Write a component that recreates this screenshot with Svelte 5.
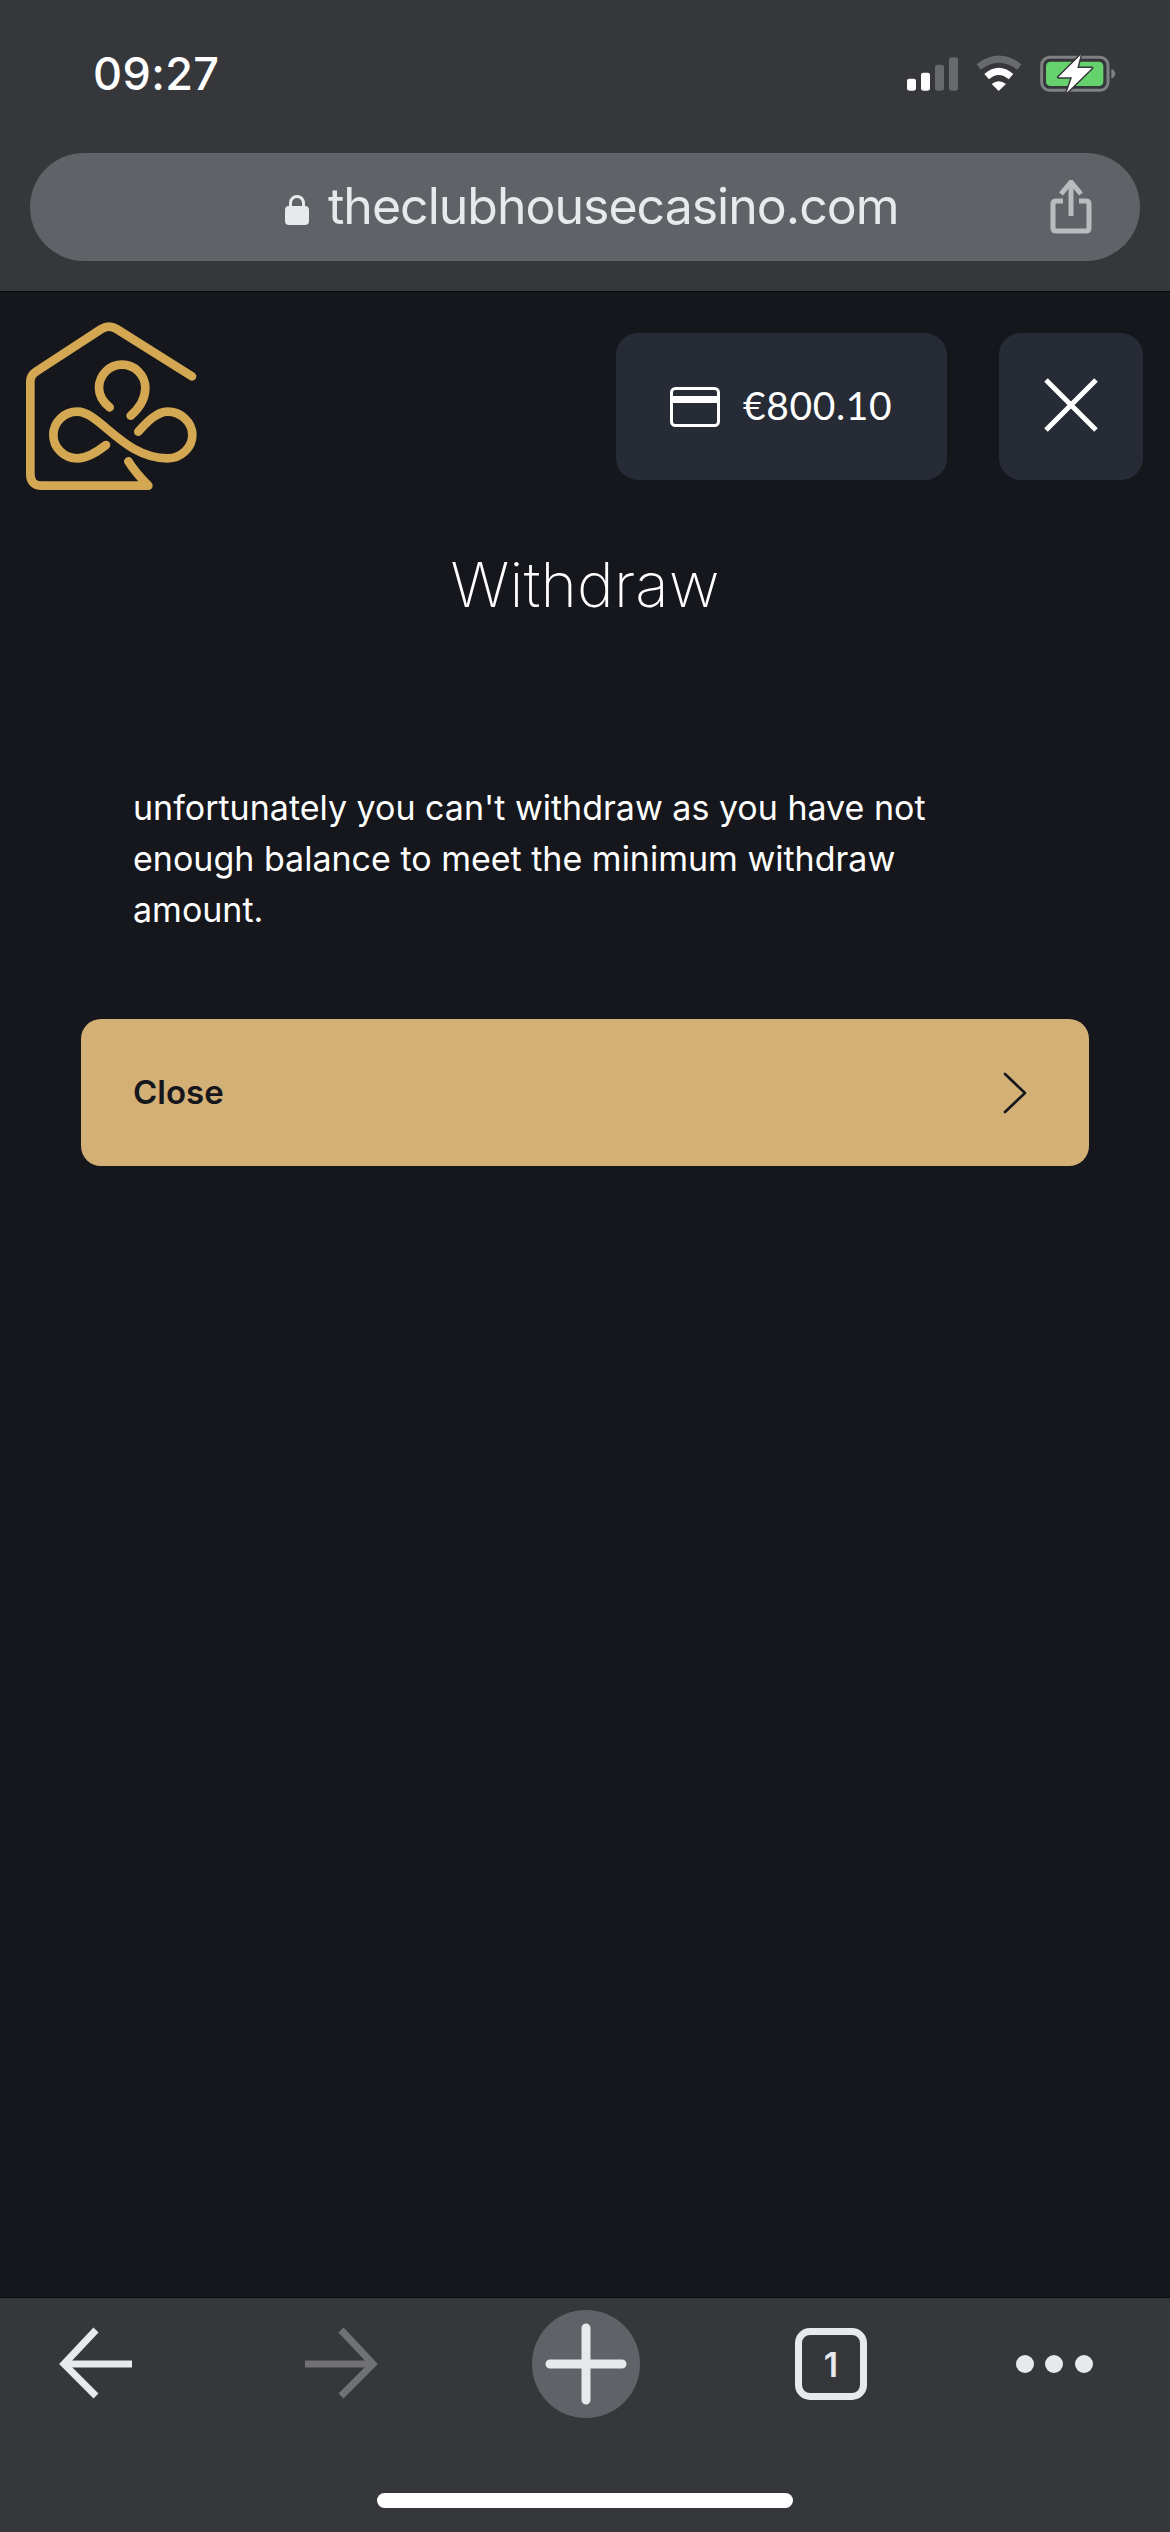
<script lang="ts">
	const message = "unfortunately you can't withdraw as you have not enough balance to meet the minimum withdraw amount.";
	const balance = '€800.10';
</script>

<div class="page">
	<!-- Safari top chrome -->
	<header class="chrome-top">
		<div class="status">
			<span class="time">09:27</span>
			<svg class="status-icons" viewBox="0 0 780 180" aria-hidden="true">
				<rect x="81" y="116" width="27" height="36" rx="7" fill="#fff" />
				<rect x="123" y="98" width="27" height="54" rx="7" fill="#fff" />
				<rect x="165" y="74" width="27" height="78" rx="7" fill="#68696c" />
				<rect x="207" y="52" width="27" height="100" rx="7" fill="#68696c" />
				<path d="M296 81 Q356 34 418 81" fill="none" stroke="#68696c" stroke-width="21" stroke-linecap="butt" />
				<path d="M320 110 Q356 78 393 110" fill="none" stroke="#fff" stroke-width="21" stroke-linecap="butt" />
				<path d="M335 132 Q356 116 378 132 L356 153 Z" fill="#fff" />
				<rect x="485" y="52" width="199" height="99" rx="24" fill="none" stroke="#7f8082" stroke-width="9" />
				<rect x="498" y="65" width="172" height="73" rx="13" fill="#65d26e" />
				<path d="M694 86 Q706 92 706 101 Q706 110 694 116 Z" fill="#7f8082" />
				<path d="M602 45 L535 112 L576 112 L560 158 L636 84 L592 84 Z" fill="#fff" stroke="#36373b" stroke-width="9" paint-order="stroke" stroke-linejoin="round" />
			</svg>
		</div>
		<div class="urlbar">
			<svg class="lock" viewBox="0 0 24 31" aria-hidden="true">
				<path d="M5.5 13 V9 A6.5 6.5 0 0 1 18.5 9 V13" fill="none" stroke="#e8e9ec" stroke-width="3" />
				<rect x="0" y="12" width="24" height="19" rx="4" fill="#e8e9ec" />
			</svg>
			<span class="url">theclubhousecasino.com</span>
			<svg class="share" viewBox="0 0 42 54" aria-hidden="true">
				<path d="M13 21 H6 Q3 21 3 24 V48 Q3 51 6 51 H36 Q39 51 39 48 V24 Q39 21 36 21 H29" fill="none" stroke="#b9bbbf" stroke-width="5" />
				<path d="M21 3 V36" stroke="#b9bbbf" stroke-width="5" />
				<path d="M11 14 L21 2 L31 14" fill="none" stroke="#b9bbbf" stroke-width="5" />
			</svg>
		</div>
	</header>

	<main class="content">
		<div class="site-head">
			<svg class="logo" viewBox="0 0 780 660" aria-label="The Clubhouse Casino">
				<g fill="none" stroke="#d4a853" stroke-width="26" stroke-linecap="round" stroke-linejoin="round">
					<path d="M576 262 L350 120 Q327 106 304 120 L108 248 Q91 259 91 278 L91 555 Q91 590 125 590 L445 590 Q405 550 385 517" />
					<path d="M329 355 C310 340 297 320 297 297 C297 258 328 227 366 227 C404 227 436 258 436 297 C436 330 415 360 392 380" />
					<path d="M318 468 C290 490 262 508 232 508 C192 508 160 476 160 438 C160 400 192 368 232 368 C300 368 370 508 503 508 C543 508 577 476 577 438 C577 400 543 368 503 368 C470 368 440 400 415 428" />
				</g>
			</svg>
			<div class="head-actions">
				<button class="balance">
					<svg class="card" viewBox="0 0 50 40" aria-hidden="true">
						<rect x="1.5" y="1.5" width="47" height="37" rx="4" fill="none" stroke="#fff" stroke-width="3" />
						<rect x="1.5" y="9" width="47" height="7" fill="#fff" />
					</svg>
					<span class="amount">{balance}</span>
				</button>
				<button class="icon-btn" aria-label="Close">
					<svg viewBox="0 0 54 54" aria-hidden="true">
						<path d="M2 2 L52 52 M52 2 L2 52" stroke="#fff" stroke-width="5" />
					</svg>
				</button>
			</div>
		</div>

		<h1 class="title">Withdraw</h1>
		<p class="message">{message}</p>
		<button class="primary">
			<span class="primary-label">Close</span>
			<svg viewBox="0 0 24 42" aria-hidden="true">
				<path d="M2 2 L22 21 L2 40" fill="none" stroke="#15171c" stroke-width="2.6" stroke-linecap="round" stroke-linejoin="round" />
			</svg>
		</button>
	</main>

	<!-- Safari bottom chrome -->
	<footer class="chrome-bottom">
		<nav class="toolbar">
			<svg class="tool" viewBox="0 0 108 108" aria-hidden="true">
				<path d="M90 54 H24" stroke="#e8e9ec" stroke-width="7" />
				<path d="M54 20 L22 54 L54 86" fill="none" stroke="#e8e9ec" stroke-width="7" />
			</svg>
			<svg class="tool" viewBox="0 0 108 108" aria-hidden="true">
				<path d="M18 54 H84" stroke="#707174" stroke-width="7" />
				<path d="M54 20 L86 54 L54 86" fill="none" stroke="#707174" stroke-width="7" />
			</svg>
			<svg class="tool" viewBox="0 0 108 108" aria-hidden="true">
				<circle cx="54" cy="54" r="54" fill="#5f6266" />
				<path d="M54 18 V90 M18 54 H90" stroke="#e8e9ec" stroke-width="9" stroke-linecap="round" />
			</svg>
			<div class="tabs">1</div>
			<svg class="tool dots" viewBox="0 0 108 108" aria-hidden="true">
				<circle cx="25" cy="54" r="9" fill="#e8e9ec" />
				<circle cx="54" cy="54" r="9" fill="#e8e9ec" />
				<circle cx="84" cy="54" r="9" fill="#e8e9ec" />
			</svg>
		</nav>
		<div class="home-indicator"></div>
	</footer>
</div>

<style>
	:global(body) {
		margin: 0;
		background: #15171c;
	}

	.page {
		width: 1170px;
		height: 2532px;
		display: flex;
		flex-direction: column;
		font-family: Inter, 'Noto Sans', sans-serif;
		color: #fff;
	}

	button {
		font: inherit;
		color: inherit;
		border: none;
		cursor: pointer;
	}

	.chrome-top {
		height: 291px;
		background: #36373b;
		border-bottom: 1px solid #0b0c0e;
	}

	.status {
		height: 113px;
		padding: 40px 30px 0 93px;
		display: flex;
		justify-content: space-between;
		align-items: flex-start;
	}

	.time {
		margin-top: 10px;
		font-size: 45px;
		line-height: 48px;
		font-weight: 550;
		letter-spacing: 0.4px;
	}

	.status-icons {
		width: 260px;
		height: 60px;
	}

	.urlbar {
		height: 108px;
		margin: 0 30px;
		padding: 0 48px 0 255px;
		background: #5f6266;
		border-radius: 54px;
		display: flex;
		align-items: center;
		gap: 19px;
	}

	.lock {
		width: 24px;
		height: 31px;
		margin-top: 4px;
	}

	.url {
		font-size: 50px;
		line-height: 60px;
		color: #e8e9ec;
		letter-spacing: -1px;
		margin-top: -2px;
	}

	.share {
		width: 42px;
		height: 54px;
		margin-left: auto;
	}

	.content {
		flex: 1;
		background: #15171c;
		display: flex;
		flex-direction: column;
	}

	.site-head {
		height: 220px;
		display: flex;
		justify-content: space-between;
		align-items: flex-start;
		padding-right: 27px;
	}

	.logo {
		width: 260px;
		height: 220px;
		margin-top: -3px;
	}

	.head-actions {
		display: flex;
		gap: 52px;
		margin-top: 41px;
	}

	.balance {
		width: 331px;
		height: 147px;
		background: #272b35;
		border-radius: 22px;
		display: flex;
		align-items: center;
		gap: 23px;
		padding: 0 0 0 54px;
		font-family: Lato, sans-serif;
		font-size: 39px;
		font-weight: 400;
		letter-spacing: 0.6px;
		color: #fff;
	}

	.amount {
		margin-top: -3px;
	}

	.card {
		width: 50px;
		height: 40px;
	}

	.icon-btn {
		width: 144px;
		height: 147px;
		background: #272b35;
		border-radius: 22px;
		display: flex;
		align-items: center;
		justify-content: center;
		padding: 0 0 3px;
	}

	.icon-btn svg {
		width: 54px;
		height: 54px;
	}

	.title {
		margin: 37px 0 0;
		text-align: center;
		font-size: 62px;
		line-height: 72px;
		font-weight: 200;
		letter-spacing: 0.2px;
	}

	.message {
		margin: 161px 0 0;
		padding: 0 187px 0 133px;
		font-size: 34px;
		line-height: 51px;
		font-weight: 400;
	}

	.primary {
		margin: 84px 81px 0;
		height: 147px;
		padding: 0 62px 0 52px;
		background: #d3b075;
		border-radius: 20px;
		display: flex;
		align-items: center;
		justify-content: space-between;
		color: #15171c;
		font-size: 33px;
		font-weight: 600;
	}

	.primary-label {
		margin-top: -2px;
	}

	.primary svg {
		width: 24px;
		height: 42px;
	}

	.chrome-bottom {
		height: 234px;
		background: #36373b;
		border-top: 1px solid #0b0c0e;
		display: flex;
		flex-direction: column;
		align-items: center;
	}

	.toolbar {
		width: 100%;
		box-sizing: border-box;
		height: 195px;
		padding: 12px 0 0 42px;
		display: flex;
		align-items: flex-start;
		gap: 137px;
	}

	.tool {
		width: 108px;
		height: 108px;
		flex-shrink: 0;
	}

	.tabs {
		box-sizing: border-box;
		flex-shrink: 0;
		width: 72px;
		height: 72px;
		margin: 18px 18px 0;
		border: 7px solid #e8e9ec;
		border-radius: 15px;
		display: flex;
		align-items: center;
		justify-content: center;
		font-size: 34px;
		font-weight: 600;
		color: #e8e9ec;
	}

	.dots {
		margin-left: -22px;
	}

	.home-indicator {
		width: 416px;
		height: 15px;
		border-radius: 8px;
		background: #fff;
	}
</style>
